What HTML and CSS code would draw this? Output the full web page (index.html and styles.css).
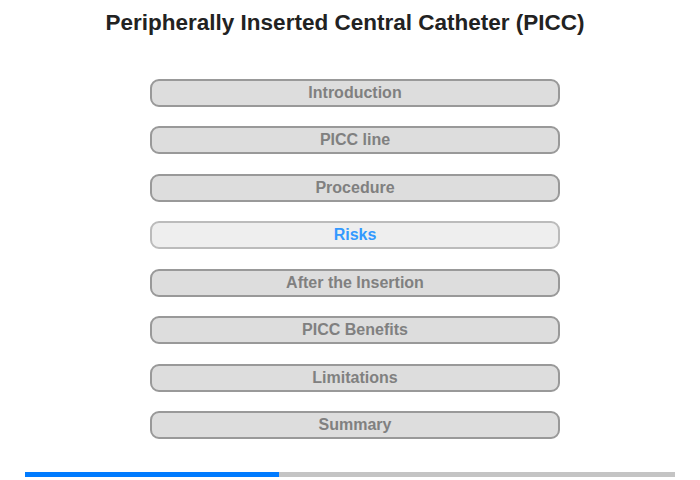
FILE: index.html
```html
<!DOCTYPE html>
<html lang="en">
<head>
    <meta charset="UTF-8">
    <meta name="viewport" content="width=device-width, initial-scale=1.0">
    <title>Peripherally Inserted Central Catheter (PICC)</title>
    <link rel="stylesheet" href="styles.css">
</head>
<body>
    <h1>Peripherally Inserted Central Catheter (PICC)</h1>
    <div class="menu">
        <button class="menu-item">Introduction</button>
        <button class="menu-item">PICC line</button>
        <button class="menu-item">Procedure</button>
        <button class="menu-item active">Risks</button>
        <button class="menu-item">After the Insertion</button>
        <button class="menu-item">PICC Benefits</button>
        <button class="menu-item">Limitations</button>
        <button class="menu-item">Summary</button>
    </div>
    <div class="progress">
        <div class="progress-fill" style="width: 39%;"></div>
    </div>
</body>
</html>
```

FILE: styles.css
```css
body {
    font-family: "Liberation Sans", Arial, sans-serif;
    margin: 0;
    background-color: #ffffff;
    width: 700px;
    height: 480px;
    position: relative;
}
h1 {
    font-size: 22.5px;
    font-weight: bold;
    color: #222222;
    text-align: center;
    margin: 0;
    padding: 10px 0 0 0;
    line-height: 26px;
    width: 690px;
}
.menu {
    display: flex;
    flex-direction: column;
    gap: 19.45px;
    width: 410px;
    margin: 43px 0 0 150px;
}
.menu-item {
    font-family: "Liberation Sans", Arial, sans-serif;
    font-size: 16px;
    font-weight: bold;
    color: #808080;
    background-color: #dddddd;
    border: 2px solid #999999;
    border-radius: 9px;
    height: 28px;
    padding: 0;
    line-height: 24px;
    text-align: center;
}
.menu-item.active {
    color: #3399ff;
    background-color: #eeeeee;
    border-color: #bbbbbb;
}
.progress {
    position: absolute;
    left: 25px;
    top: 472px;
    width: 650px;
    height: 5px;
    background-color: #c4c4c4;
}
.progress-fill {
    height: 100%;
    background-color: #007bff;
}
```
